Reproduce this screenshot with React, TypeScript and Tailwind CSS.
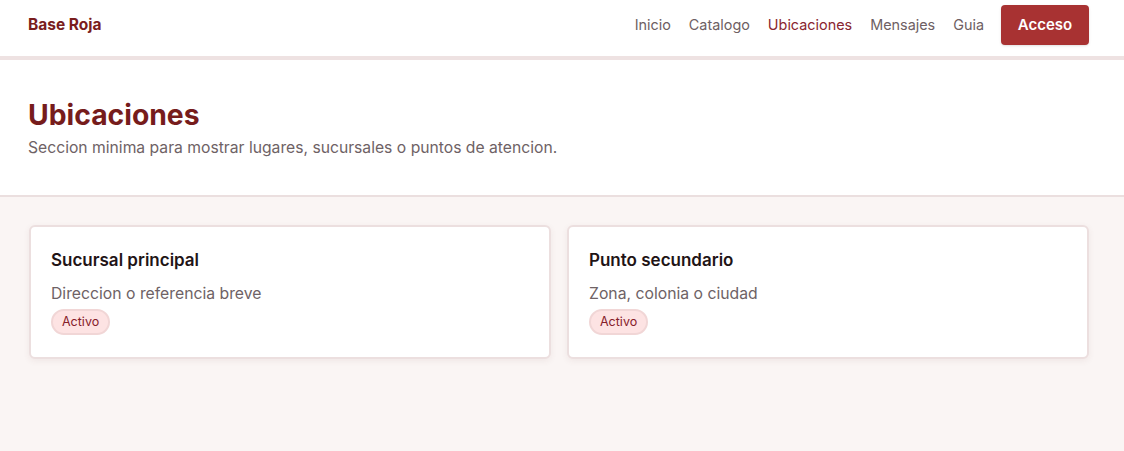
const links = ['Inicio', 'Catalogo', 'Ubicaciones', 'Mensajes', 'Guia']

const places = [
  { name: 'Sucursal principal', detail: 'Direccion o referencia breve' },
  { name: 'Punto secundario', detail: 'Zona, colonia o ciudad' },
]

function Header() {
  return (
    <header className="flex h-[60px] items-center justify-between border-b-4 border-[#eee2e2] bg-white pb-[6px] pl-7 pr-[35px]">
      <span className="text-[15.5px] font-bold text-[#7a1d1d]">Base Roja</span>
      <nav className="flex items-center gap-[18px] text-[14.4px]">
        {links.map((l) => (
          <a
            key={l}
            className={l === 'Ubicaciones' ? 'text-[#8a2630]' : 'text-[#6e6063]'}
          >
            {l}
          </a>
        ))}
        <button className="ml-[-1px] h-[40px] w-[88px] rounded-[4px] bg-[#a83232] text-[15px] font-semibold text-white shadow-sm">
          Acceso
        </button>
      </nav>
    </header>
  )
}

function PlaceCard({ name, detail }: { name: string; detail: string }) {
  return (
    <article className="rounded-md border-2 border-[#ecdfdf] bg-white px-5 pb-[22px] pt-[21px] shadow-[0_2px_6px_rgba(120,60,60,0.08)]">
      <h2 className="text-[17px] font-semibold leading-6 text-[#1f1416]">{name}</h2>
      <p className="mt-[10px] text-[15.75px] leading-6 text-[#6e6265]">{detail}</p>
      <span className="mt-[3px] inline-flex h-[26px] items-center rounded-full border-2 border-[#f1d6d6] bg-[#fde3e3] px-[9px] text-[12.5px] text-[#86202a]">
        Activo
      </span>
    </article>
  )
}

export default function App() {
  return (
    <div className="min-h-[451px] bg-[#faf5f4] font-['Inter',sans-serif]">
      <Header />
      <section className="border-b-2 border-[#ebdfdf] bg-white pb-[35px] pl-7 pr-[35px] pt-[38px]">
        <h1 className="text-[28.3px] font-bold leading-[34px] text-[#761c1c]">Ubicaciones</h1>
        <p className="mt-[4px] text-[15.7px] leading-6 text-[#6e6265]">
          Seccion minima para mostrar lugares, sucursales o puntos de atencion.
        </p>
      </section>
      <main className="grid grid-cols-2 gap-4 pl-[29px] pr-[35px] pt-7">
        {places.map((p) => (
          <PlaceCard key={p.name} {...p} />
        ))}
      </main>
    </div>
  )
}
